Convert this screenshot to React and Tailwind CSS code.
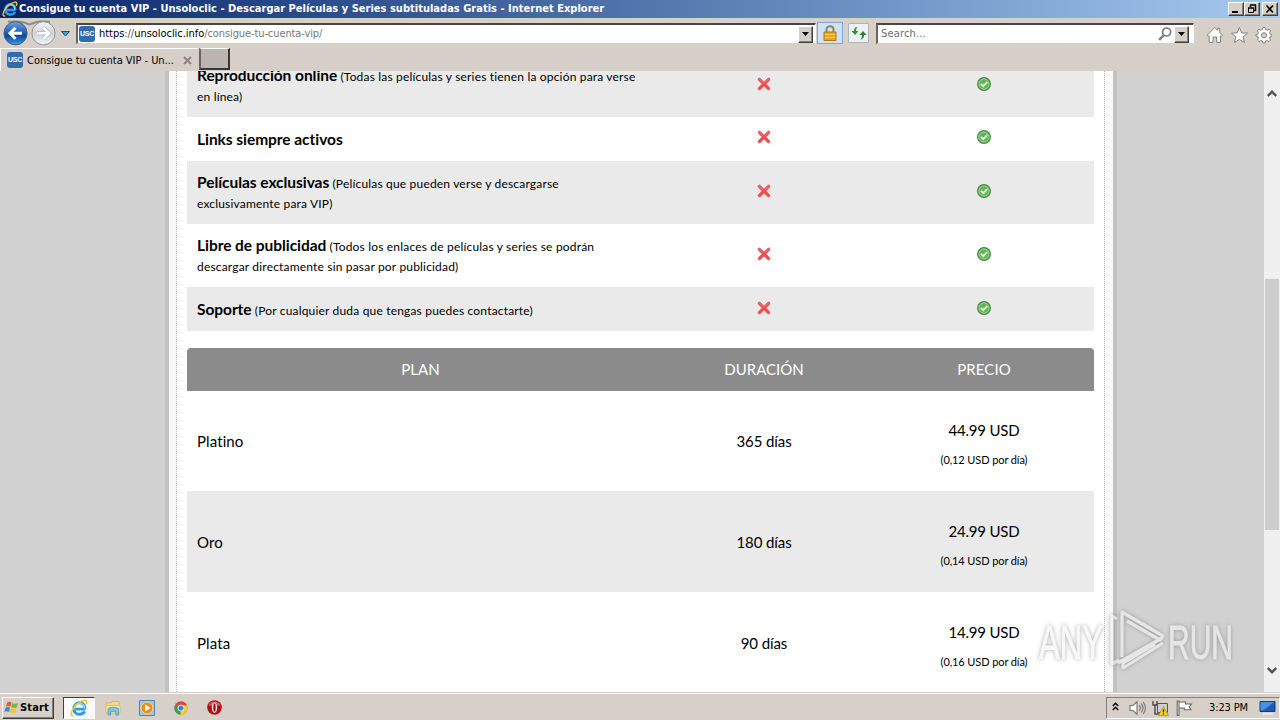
import React from "react";

const features = [
  { title: "Reproducción online", note: "(Todas las películas y series tienen la opción para verse", rest: "en línea)", height: "h-[63px] -mt-[17px]", icons: "pb-[3px]" },
  { title: "Links siempre activos", height: "h-[44px]", icons: "pb-[5px]" },
  { title: "Películas exclusivas", note: "(Películas que pueden verse y descargarse", rest: "exclusivamente para VIP)", height: "h-[63px]", icons: "pb-[3px]" },
  { title: "Libre de publicidad", note: "(Todos los enlaces de películas y series se podrán", rest: "descargar directamente sin pasar por publicidad)", height: "h-[63px]", icons: "pb-[3px]" },
  { title: "Soporte", note: "(Por cualquier duda que tengas puedes contactarte)", height: "h-[44px]", icons: "pb-[3px]" },
];

const plans = [
  { name: "Platino", days: "365 días", price: "44.99 USD", perDay: "(0,12 USD por día)", height: "h-[100px]" },
  { name: "Oro", days: "180 días", price: "24.99 USD", perDay: "(0,14 USD por día)", height: "h-[101px] pt-px" },
  { name: "Plata", days: "90 días", price: "14.99 USD", perDay: "(0,16 USD por día)", height: "h-[101px] pt-px" },
];

function IeIcon({ className }) {
  return (
    <svg viewBox="0 0 16 16" className={className} fill="none">
      <path d="M13.4 9H4.9M13.3 9.2C13.4 5.6 11.4 3.4 8.4 3.4C5.5 3.4 3.4 5.6 3.4 8.6C3.4 11.6 5.4 13.6 8.4 13.6C10.6 13.6 12.2 12.6 13 11" stroke="#2f9be0" strokeWidth="2.6" />
      <path d="M12.9 8.6C12.8 5.6 11 3.7 8.4 3.7C5.8 3.7 3.7 5.7 3.7 8.5" stroke="#9adcfa" strokeWidth="1.2" />
      <path d="M3.2 14.8C.6 15.6.4 13 2.3 9.6C4.6 5.4 9.6 1.6 12.9 1.1C15.2.8 15.2 3 14.2 4.8" stroke="#f3c52f" strokeWidth="1.4" />
    </svg>
  );
}

function UscIcon() {
  return (
    <span className="flex h-4 w-4 shrink-0 items-center justify-center rounded-[3px] bg-[#2f6cab] font-['Liberation_Sans_Narrow','Liberation_Sans',sans-serif] text-[7px] font-bold tracking-[-0.2px] text-white">
      USC
    </span>
  );
}

function CrossIcon() {
  return (
    <svg viewBox="0 0 14 14" className="h-[14px] w-[14px]" strokeLinecap="round">
      <path d="M2.4 2.4L11.6 11.6M11.6 2.4L2.4 11.6" stroke="#c97a80" strokeWidth="3.4" />
      <path d="M2.6 2.6L11.4 11.4M11.4 2.6L2.6 11.4" stroke="#f8484e" strokeWidth="2.4" />
      <path d="M2.6 2.4L6 5.6M11.2 2.4L8 5.6" stroke="#fb8a8c" strokeWidth=".8" />
    </svg>
  );
}

function CheckIcon() {
  return (
    <svg viewBox="0 0 14 14" className="h-[14px] w-[14px]" fill="none">
      <circle cx="7" cy="7" r="6.4" fill="#62b458" stroke="#3f8a3f" strokeWidth="1.1" />
      <circle cx="7" cy="7" r="5" stroke="#9bd890" strokeWidth="1" />
      <path d="M4 6.9L6.4 9.2L10.2 5" stroke="#f2fbf0" strokeWidth="1.8" />
    </svg>
  );
}

function CaptionButton({ children }) {
  return (
    <span className="flex h-[14px] w-4 items-center justify-center border border-t-white border-r-[#404040] border-b-[#404040] border-l-white bg-[#d6d0c8] shadow-[inset_-1px_-1px_0_#808080]">
      <svg viewBox="0 0 12 10" className="h-[10px] w-3" fill="none" stroke="#000">
        {children}
      </svg>
    </span>
  );
}

function DropButton() {
  return (
    <span className="flex h-[17px] w-[15px] shrink-0 items-center justify-center border border-t-white border-r-[#404040] border-b-[#404040] border-l-white bg-[#d6d0c8] shadow-[inset_-1px_-1px_0_#808080]">
      <svg viewBox="0 0 7 4" className="h-1 w-[7px]">
        <path d="M0 0H7L3.5 4Z" fill="#000" />
      </svg>
    </span>
  );
}

function TitleBar() {
  return (
    <div className="flex h-[18px] items-center bg-gradient-to-r from-[#0a246a] to-[#a6caf0] pr-[2px] pl-[2px]">
      <IeIcon className="h-4 w-4" />
      <span className="ml-px flex-1 pt-px text-[11px] font-bold tracking-[0.015px] whitespace-nowrap text-white">
        Consigue tu cuenta VIP - Unsoloclic - Descargar Películas y Series subtituladas Gratis - Internet Explorer
      </span>
      <div className="flex">
        <CaptionButton>
          <path d="M2 8H8" strokeWidth="2" />
        </CaptionButton>
        <CaptionButton>
          <path d="M4 1H10M4.5 1V3M9.5 1V6.5H8M2 4H8" strokeWidth="1.5" />
          <path d="M2.5 4V8.5H7.5V4" />
        </CaptionButton>
        <span className="w-[2px]" />
        <CaptionButton>
          <path d="M2.5 1.5L9 8.5M9 1.5L2.5 8.5" strokeWidth="1.7" />
        </CaptionButton>
      </div>
    </div>
  );
}

function AddressBar() {
  return (
    <div className="flex h-[30px] items-center bg-[#d6d0c8]">
      <svg viewBox="0 0 74 30" className="h-[30px] w-[74px] shrink-0">
        <defs>
          <linearGradient id="back" x1="0" y1="0" x2="0" y2="1">
            <stop offset="0" stopColor="#6f9fd8" />
            <stop offset=".45" stopColor="#2465b8" />
            <stop offset=".6" stopColor="#0c479c" />
            <stop offset="1" stopColor="#36a0e8" />
          </linearGradient>
          <linearGradient id="forward" x1="0" y1="0" x2="0" y2="1">
            <stop offset="0" stopColor="#f4f4f6" />
            <stop offset=".5" stopColor="#cfd3d9" />
            <stop offset="1" stopColor="#f2f4f7" />
          </linearGradient>
        </defs>
        <path d="M8 3.8C20 2.5 24 4.5 29.5 6.5C35 4.5 39 2.5 50 3.8" fill="none" stroke="#8b8c95" strokeWidth="2" />
        <circle cx="15.5" cy="15.3" r="11.6" fill="url(#back)" stroke="#4c6285" />
        <path d="M22 15.3H10.5M15.5 9.8L10 15.3L15.5 20.8" fill="none" stroke="#fff" strokeWidth="3" />
        <circle cx="43.5" cy="15.3" r="11.6" fill="url(#forward)" stroke="#8f949c" />
        <path d="M37 15.3H48.5M43.5 9.8L49 15.3L43.5 20.8" fill="none" stroke="#b3b6bc" strokeWidth="4" />
        <path d="M37 15.3H48.5M43.5 9.8L49 15.3L43.5 20.8" fill="none" stroke="#fff" strokeWidth="2.6" />
        <path d="M61.5 13.5H69.5L65.5 18Z" fill="#3fa0d0" stroke="#1d4f7c" />
      </svg>
      <div className="mt-[1px] ml-[2px] flex h-[21px] w-[740px] items-center border-t-2 border-r border-b border-l-2 border-t-[#4d4444] border-r-white border-b-[#d6d0c8] border-l-[#6b6462] bg-white pr-[2px] pl-[1px]">
        <UscIcon />
        <span className="ml-1 flex-1 pt-px text-[11px] whitespace-nowrap text-[#777]">
          <span className="tracking-[-0.04px] text-black"><span>https</span><span className="text-[#555]">://</span>unsoloclic.info</span>
          <span className="tracking-[-0.1px]">/consigue-tu-cuenta-vip/</span>
        </span>
        <DropButton />
      </div>
      <div className="ml-px flex h-[22px] w-[26px] items-center justify-center border border-[#7aa7e0] bg-[#cfe2f8]">
        <svg viewBox="0 0 14 16" className="h-4 w-[14px]" fill="none">
          <path d="M3.5 8V4.5C3.5 .2 10.5 .2 10.5 4.5V8" stroke="#9a8450" strokeWidth="2" />
          <path d="M1 7H13V15.5H1Z" fill="#e8a51c" stroke="#b27a12" />
          <path d="M2 9.5H12M2 12.5H12" stroke="#f9d56c" />
        </svg>
      </div>
      <div className="ml-[5px] flex h-[20px] w-[21px] items-center justify-center rounded-[1px] border border-[#aab3bf] bg-[#eef1f2]">
        <svg viewBox="0 0 16 14" className="h-[14px] w-4">
          <path d="M6.5 1C5.2 2.2 5 3.5 5 5H7.6L4 9L.4 5H3C3 2.6 4 1.2 6.5 1Z" fill="#299b35" />
          <path d="M9.5 13.4C10.8 12.2 11 11 11 9H8.4L12 5L15.6 9H13C13 11.6 12 13.2 9.5 13.4Z" fill="#24832d" />
        </svg>
      </div>
      <div className="mt-[1px] ml-[7px] flex h-[21px] w-[318px] items-center border-t-2 border-r border-b border-l-2 border-t-[#4d4444] border-r-white border-b-[#d6d0c8] border-l-[#6b6462] bg-white pr-[4px] pl-[3px]">
        <span className="flex-1 pt-px text-[11px] tracking-[0.17px] text-[#6d6d6d]">Search...</span>
        <svg viewBox="0 0 14 14" className="mr-[2px] h-[14px] w-[14px]" fill="none" stroke="#7b7b7e">
          <circle cx="8.6" cy="5" r="4" strokeWidth="1.7" />
          <path d="M5.8 8L1.2 12.8" strokeWidth="2.4" />
        </svg>
        <DropButton />
      </div>
      <svg viewBox="0 0 66 18" className="mt-[3px] ml-[12px] h-[18px] w-[66px] shrink-0" fill="#fff" stroke="#85817d" strokeWidth="1">
        <path d="M1 9.3L8.8 1.6L11.5 4.2V2.4H13.7V6.4L16.6 9.3L15.3 10.5L14.5 9.8V16.4H10.6V11H7V16.4H3.2V9.8L2.3 10.6Z" />
        <path d="M33.4 1.4L35.6 6.8L41.4 7.2L37 10.9L38.4 16.5L33.4 13.4L28.4 16.5L29.8 10.9L25.4 7.2L31.2 6.8Z" />
        <path d="M56.9 1.5H59.1L59.6 3.6L61.2 4.2L63 3.1L64.6 4.7L63.5 6.5L64.1 8L66 8.6V10.2L64.1 10.8L63.5 12.2L64.6 14L63 15.6L61.2 14.5L59.6 15.1L59.1 17H56.9L56.4 15.1L54.8 14.5L53 15.6L51.4 14L52.5 12.2L51.9 10.8L50 10.2V8.6L51.9 8L52.5 6.5L51.4 4.7L53 3.1L54.8 4.2L56.4 3.6Z" />
        <circle cx="58" cy="9.3" r="2.6" fill="#d6d0c8" />
      </svg>
    </div>
  );
}

function TabRow() {
  return (
    <div className="flex h-[23px] bg-[#d6cec8]">
      <div className="flex h-[23px] w-[198px] items-center border-t border-l border-white pl-[6px]">
        <UscIcon />
        <span className="ml-1 w-[152px] pt-[2px] text-[11px] tracking-[-0.03px] whitespace-nowrap">Consigue tu cuenta VIP - Un...</span>
        <svg viewBox="0 0 9 9" className="ml-1 h-[9px] w-[9px]" stroke="#8b8683" strokeWidth="2">
          <path d="M1 1L8 8M8 1L1 8" />
        </svg>
      </div>
      <div className="ml-px h-[22px] w-[31px] border-t border-r-2 border-b-2 border-l-2 border-t-white border-r-[#3b3636] border-b-[#3b3636] border-l-[#6b6462] bg-[#bcb4ae]" />
    </div>
  );
}

function FeatureTable() {
  return (
    <div className="w-[907px]">
      {features.map((f) => (
        <div key={f.title} className={`grid grid-cols-[467px_220px_220px] items-center odd:bg-[#eaeaea] ${f.height}`}>
          <div className="pt-px pl-[10px] text-[12px] leading-[20px] tracking-[0.18px] whitespace-nowrap">
            <span className="text-[15.5px] font-bold tracking-[-0.05px]">{f.title}</span>
            {f.note && <span> {f.note}</span>}
            {f.rest && <div>{f.rest}</div>}
          </div>
          <div className={`flex justify-center ${f.icons}`}>
            <CrossIcon />
          </div>
          <div className={`flex justify-center ${f.icons}`}>
            <CheckIcon />
          </div>
        </div>
      ))}
    </div>
  );
}

function PlanTable() {
  return (
    <div className="mt-[17px] w-[907px] text-[15px]">
      <div className="grid h-[43px] grid-cols-[467px_220px_220px] items-center rounded-t-[4px] bg-[#8b8b8b] text-center text-white">
        <div>PLAN</div>
        <div>DURACIÓN</div>
        <div className="tracking-[0.1px]">PRECIO</div>
      </div>
      {plans.map((p) => (
        <div key={p.name} className={`grid grid-cols-[467px_220px_220px] items-center text-center odd:bg-[#eaeaea] ${p.height}`}>
          <div className="pl-[10px] text-left tracking-[0.1px]">{p.name}</div>
          <div className="tracking-[-0.1px]">{p.days}</div>
          <div className="pt-[7px] leading-[30px]">
            <div className="tracking-[-0.2px]">{p.price}</div>
            <div className="text-[11px] tracking-[-0.1px]">{p.perDay}</div>
          </div>
        </div>
      ))}
    </div>
  );
}

function Watermark() {
  return (
    <svg viewBox="0 0 204 70" className="absolute top-[536px] left-[1034px] h-[70px] w-[204px] overflow-visible opacity-60 drop-shadow-[0_0_2px_#777]">
      <g fill="#f4f4f4" stroke="#f4f4f4" strokeWidth=".9" fontFamily="'Liberation Sans Narrow', 'Liberation Sans', sans-serif" fontSize="49">
        <text x="5" y="51.5" textLength="64" lengthAdjust="spacingAndGlyphs">ANY</text>
        <text x="134" y="51.5" textLength="65" lengthAdjust="spacingAndGlyphs">RUN</text>
      </g>
      <g fill="none" stroke="#f4f4f4" strokeWidth="3.2" strokeLinejoin="round">
        <path d="M83 12L78 9V57L85 53" />
        <path d="M88 50V5L129 29L126 33L93 14" />
        <path d="M84 56L128 31M129 36L89 61V56L121 37" />
      </g>
    </svg>
  );
}

function Taskbar() {
  return (
    <div className="flex h-[28px] items-center border-t border-[#d6d0c8] bg-[#d6d0c8] shadow-[inset_0_1px_0_#fff]">
      <div className="mt-[2px] ml-[2px] flex h-[22px] w-[52px] items-center border border-t-white border-r-[#404040] border-b-[#404040] border-l-white pl-[1px] shadow-[inset_-1px_-1px_0_#808080]">
        <svg viewBox="0 0 16 16" className="h-[15px] w-[15px]">
          <path d="M3.4 2.6C5 1.6 6.6 1.8 8 2.7L6.8 7.2C5.4 6.4 3.8 6.2 2.1 7.1Z" fill="#e8592a" />
          <path d="M8.8 3.2C10.8 4.3 12.8 4.2 15 3.1L13.7 7.6C11.8 8.7 9.6 8.5 7.6 7.6Z" fill="#79b33e" />
          <path d="M1.8 8.1C3.4 7.3 5 7.4 6.5 8.2L5.2 12.7C3.7 11.8 2.1 11.8.4 12.7Z" fill="#3e86d4" />
          <path d="M7.3 8.7C9.4 9.7 11.4 9.7 13.4 8.6L12.1 13.1C10.1 14.3 8 14.1 6 13.1Z" fill="#f5c22e" />
        </svg>
        <span className="ml-[1px] pt-[2px] text-[11px] font-bold tracking-[0.17px]">Start</span>
      </div>
      <div className="mt-[2px] ml-[9px] flex h-[22px] w-[32px] items-center justify-center border border-t-[#404040] border-r-white border-b-white border-l-[#404040] bg-[#fbfaf9]">
        <IeIcon className="h-[18px] w-[18px]" />
      </div>
      <svg viewBox="0 0 16 16" className="mt-[2px] ml-[10px] h-4 w-4">
        <path d="M1 3H6L7 1.5H14V6H1Z" fill="#f4dc83" stroke="#cfae4e" strokeWidth=".7" />
        <path d="M1 5.5H15V13H1Z" fill="#f9e9a6" stroke="#d1b459" strokeWidth=".7" />
        <path d="M3 8.5C5 6.8 11 6.8 13.5 8.5V15H10.8V11.5H5.6V15H3Z" fill="#7cc4e6" stroke="#4b94bd" strokeWidth=".7" />
      </svg>
      <svg viewBox="0 0 16 16" className="mt-[2px] ml-[18px] h-4 w-4">
        <path d="M.5 .5H15.5V15.5H.5Z" fill="#9cc4e8" stroke="#4e86b8" />
        <circle cx="8" cy="8" r="6" fill="#f08a1c" stroke="#fbd9a2" />
        <path d="M6 4.4L11.5 8L6 11.6Z" fill="#fff" />
      </svg>
      <svg viewBox="0 0 16 16" className="mt-[2px] ml-[19px] h-[14px] w-[14px]">
        <circle cx="8" cy="8" r="7.6" fill="#e14334" />
        <path d="M8 8L1.4 4.2A7.6 7.6 0 0 0 7.2 15.6L11 9.7Z" fill="#35a351" />
        <path d="M8 8L7.2 15.6A7.6 7.6 0 0 0 15 5H8Z" fill="#f8cb2c" />
        <circle cx="8" cy="8" r="3.8" fill="#fff" />
        <circle cx="8" cy="8" r="2.9" fill="#3b7de0" />
      </svg>
      <svg viewBox="0 0 16 16" className="mt-[2px] ml-[19px] h-[15px] w-[15px]">
        <circle cx="8" cy="8" r="7.8" fill="#b01018" />
        <path d="M1.5 6A7 7 0 0 1 14.5 6Z" fill="#d8575b" />
        <ellipse cx="8" cy="8" rx="2.8" ry="5.6" fill="#f6e3e3" />
        <ellipse cx="8" cy="8" rx="1.2" ry="4.6" fill="#8c0c12" />
      </svg>
      <div className="mt-[2px] ml-auto flex h-[22px] w-[174px] items-center border border-t-[#808080] border-r-white border-b-white border-l-[#808080] pl-[5px]">
        <svg viewBox="0 0 7 9" className="mb-[3px] h-[9px] w-[7px]" fill="none" stroke="#000" strokeWidth="1.4">
          <path d="M.8 4L3.5 1.3L6.2 4M.8 8L3.5 5.3L6.2 8" />
        </svg>
        <svg viewBox="0 0 17 16" className="ml-[10px] h-4 w-[17px]" fill="none" stroke="#77736f" strokeWidth="1.1">
          <path d="M1 5.5H4L8 1.8V14.2L4 10.5H1Z" fill="#fff" />
          <path d="M10.3 5.4C11.5 7 11.5 9 10.3 10.6M12.3 3.6C14.3 6.2 14.3 9.8 12.3 12.4M14.2 2C17 5.8 17 10.2 14.2 14" />
        </svg>
        <svg viewBox="0 0 17 16" className="ml-[6px] h-4 w-[17px]">
          <path d="M5.5 3.5H15.5V12.5H5.5Z" fill="#c9d0d6" stroke="#55524f" />
          <path d="M1 1V5H5V1M3 5V14H8" fill="none" stroke="#4c4946" strokeWidth="1.4" />
          <path d="M11.5 6.5L16.5 15.5H6.5Z" fill="#f9cf1d" stroke="#c38f0d" strokeWidth=".8" />
          <path d="M11.5 9.2V12.4M11.5 13.3V14.5" stroke="#222" strokeWidth="1.2" />
        </svg>
        <svg viewBox="0 0 17 16" className="ml-[7px] h-4 w-[17px]" fill="#fff" stroke="#6b6764" strokeWidth="1.1">
          <path d="M1.2 1V15.4H3V1ZM3 2H9.5V4H15.5L13.2 7L15 9.8H8.3V8H3Z" />
        </svg>
        <span className="ml-[16px] pt-[2px] text-[11px] tracking-[-0.12px] whitespace-nowrap">3:23 PM</span>
        <svg viewBox="0 0 17 14" className="ml-[11px] h-[14px] w-[17px]">
          <path d="M1 .5H16V10.5H1Z" fill="#1d59b8" stroke="#123c7c" />
          <path d="M1.5 1H15.5L4 9.5H1.5Z" fill="#4a8fe0" />
          <path d="M4 12H14V13.5H4Z" fill="#f1f1f1" />
        </svg>
      </div>
    </div>
  );
}

export default function App() {
  return (
    <div className="flex h-[720px] w-[1280px] flex-col overflow-hidden bg-[#d6d0c8] font-['DejaVu_Sans_Condensed','DejaVu_Sans',sans-serif] text-black">
      <TitleBar />
      <AddressBar />
      <TabRow />
      {/* Viewport */}
      <div className="relative flex h-[621px] overflow-hidden bg-[#d1d1d1] font-['Lato',sans-serif] [font-variant-ligatures:none]">
        <div className="ml-[165px] flex h-full w-[952px] border-x-4 border-[#c1c1c1] bg-[#f8f8f8] px-[7px]">
          <div className="h-full w-[929px] border-x border-dotted border-[#bdbdbd] bg-white pl-[10px]">
            <FeatureTable />
            <PlanTable />
          </div>
        </div>
        {/* Scrollbar */}
        <div className="ml-auto flex h-full w-4 flex-col items-center bg-[#f0f0f0]">
          <svg viewBox="0 0 10 7" className="mt-[19px] h-[7px] w-[10px]" fill="none" stroke="#555" strokeWidth="2.4">
            <path d="M.8 6L5 1.8L9.2 6" />
          </svg>
          <div className="mt-[182px] h-[251px] w-[14px] bg-[#cdcdcd]" />
          <svg viewBox="0 0 10 7" className="mt-auto mb-[18px] h-[7px] w-[10px]" fill="none" stroke="#555" strokeWidth="2.4">
            <path d="M.8 1L5 5.2L9.2 1" />
          </svg>
        </div>
        <Watermark />
      </div>
      <Taskbar />
    </div>
  );
}
